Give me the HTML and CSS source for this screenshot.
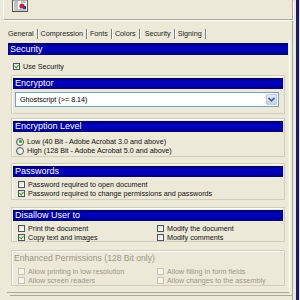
FILE: index.html
```html
<!DOCTYPE html>
<html lang="en">
<head>
  <meta charset="UTF-8">
  <title>Security</title>
  <link rel="stylesheet" href="styles.css">
</head>
<body>
<div class="window">
  <div class="top">
    <svg class="logo" width="16" height="12" viewBox="0 0 16 12">
      <rect x="0.5" y="0" width="15" height="11.5" fill="#fff" stroke="#555"/>
      <path d="M2 2h4M2 4h4M2 6h4M2 8h4M2 10h12M9 2h5" stroke="#888" stroke-width="1"/>
      <circle cx="10" cy="6" r="2.6" fill="#d02030"/>
      <rect x="11" y="6" width="3" height="3" fill="#2040c0"/>
    </svg>
  </div>

  <div class="tabs">
    <span class="tab">General</span>
    <span class="tab">Compression</span>
    <span class="tab">Fonts</span>
    <span class="tab">Colors</span>
    <span class="tab active">Security</span>
    <span class="tab">Signing</span>
  </div>

  <div class="panel">
    <div class="bar main">Security</div>
    <label class="row use"><span class="cb on"></span>Use Security</label>

    <div class="group g-enc">
      <div class="bar">Encryptor</div>
      <div class="select">
        <span>Ghostscript (&gt;= 8.14)</span>
        <span class="drop">
          <svg width="7" height="5" viewBox="0 0 7 5"><path d="M0.5 0.8L3.5 3.8L6.5 0.8" fill="none" stroke="#4d6185" stroke-width="1.6"/></svg>
        </span>
      </div>
    </div>

    <div class="group g-level">
      <div class="bar">Encryption Level</div>
      <label class="row ind-r"><span class="rb on"></span>Low (40 Bit - Adobe Acrobat 3.0 and above)</label>
      <label class="row ind-r"><span class="rb"></span>High (128 Bit - Adobe Acrobat 5.0 and above)</label>
    </div>

    <div class="group g-pass">
      <div class="bar">Passwords</div>
      <label class="row ind"><span class="cb"></span>Password required to open document</label>
      <label class="row ind"><span class="cb on"></span>Password required to change permissions and passwords</label>
    </div>

    <div class="group g-dis">
      <div class="bar">Disallow User to</div>
      <div class="cols">
        <label class="row"><span class="cb"></span>Print the document</label>
        <label class="row"><span class="cb"></span>Modify the document</label>
        <label class="row"><span class="cb on"></span>Copy text and images</label>
        <label class="row"><span class="cb"></span>Modify comments</label>
      </div>
    </div>

    <div class="group g-enh">
      <div class="legend">Enhanced Permissions (128 Bit only)</div>
      <div class="cols">
        <label class="row"><span class="cb off"></span>Allow printing in low resolution</label>
        <label class="row"><span class="cb off"></span>Allow filling in form fields</label>
        <label class="row"><span class="cb off"></span>Allow screen readers</label>
        <label class="row"><span class="cb off"></span>Allow changes to the assembly</label>
      </div>
    </div>
  </div>
</div>
</body>
</html>
```

FILE: styles.css
```css
body {
  margin: 0;
  width: 300px;
  height: 300px;
  overflow: hidden;
  background: #ece9d8;
  font-family: "Liberation Sans", Arial, sans-serif;
  font-size: 7.2px;
  color: #000;
}

.window {
  width: 299px;
  height: 300px;
  box-sizing: border-box;
  border-right: 3px solid #0b1a7c;
  box-shadow: inset -3px 0 0 #ece9d8, inset -4px 0 0 #aca899;
}

.top {
  height: 20px;
  margin-left: 3px;
  margin-right: 3px;
  box-sizing: border-box;
  border-left: 1px solid #fff;
  border-right: 1px solid #aca899;
  border-bottom: 1px solid #aca899;
  box-shadow: 1px 1px 0 #fff;
  padding-left: 8px;
}

.logo { display: block; }

.tabs {
  display: flex;
  margin-top: 8px;
  padding-left: 7px;
  height: 12px;
  align-items: center;
}

.tab {
  padding: 0 3px 0 1px;
  border-right: 1px solid #808080;
  box-shadow: 1px 0 0 #fff;
  margin-right: 2px;
  line-height: 10px;
  color: #222;
}

.tab.active {
  padding: 0 3px 0 3px;
}

.panel {
  margin: 0 6px 0 7px;
  height: 253px;
  box-sizing: border-box;
  border-right: 1px solid #fff;
  border-bottom: 1px solid #aca899;
  box-shadow: 2px 2px 0 #ece9d8, 3px 3px 0 #aca899;
  padding: 3px 1px 0 1px;
}

.bar {
  height: 11px;
  line-height: 11px;
  padding-left: 2px;
  color: #fff;
  font-size: 9px;
  background: linear-gradient(#00005a, #0000c4 35%, #0000b0 70%, #000070);
}

.bar.main {
  height: 12px;
  line-height: 12px;
}

.row {
  display: flex;
  align-items: center;
  height: 9px;
  white-space: nowrap;
  color: #111;
}

.use {
  margin: 7px 0 0 5px;
  height: 8px;
}

.cb, .rb {
  width: 7px;
  height: 7px;
  box-sizing: border-box;
  border: 1px solid #4b5660;
  background: linear-gradient(135deg, #dcdbd2, #fff);
  margin-right: 3px;
  flex: none;
  position: relative;
}

.cb.on::after {
  content: "";
  position: absolute;
  left: 1px;
  top: 0;
  width: 2px;
  height: 3px;
  border: solid #21a121;
  border-width: 0 1.5px 1.5px 0;
  transform: rotate(40deg);
}

.cb.off {
  border-color: #c5c2b2;
  background: #f4f3ee;
}

.rb {
  border-radius: 50%;
  width: 8px;
  height: 8px;
}

.rb.on::after {
  content: "";
  position: absolute;
  left: 1.5px;
  top: 1.5px;
  width: 3px;
  height: 3px;
  border-radius: 50%;
  background: #21a121;
}

.group {
  margin: 0 3px 0 3px;
  border: 1px solid #d0cdbd;
  box-shadow: inset 1px 1px 0 #fff;
  padding: 2px 1px 0 1px;
  box-sizing: border-box;
}

.g-enc { margin-top: 5px; height: 39px; }
.g-level { margin-top: 4px; height: 39px; }
.g-pass { margin-top: 6px; height: 37px; }
.g-dis { margin-top: 7px; height: 35px; }
.g-enh { margin-top: 8px; height: 36px; }

.select {
  margin: 3px 4px 0 2px;
  height: 15px;
  box-sizing: border-box;
  border: 1px solid #7f9db9;
  background: #fff;
  display: flex;
  align-items: center;
  justify-content: space-between;
  padding-left: 4px;
}

.drop {
  width: 11px;
  height: 11px;
  margin-right: 1px;
  box-sizing: border-box;
  border: 1px solid #b9c9ef;
  border-radius: 2px;
  background: linear-gradient(#e3ebfc, #c0d1f5);
  display: flex;
  align-items: center;
  justify-content: center;
}

.g-level .bar, .g-pass .bar, .g-dis .bar { margin-bottom: 3px; }
.g-level .bar { margin-bottom: 5px; }

.ind-r { padding-left: 3px; }
.ind { padding-left: 5px; }

.cols {
  display: grid;
  grid-template-columns: 139px 1fr;
  padding-left: 5px;
}

.legend {
  color: #9a9788;
  font-size: 8.6px;
  height: 11px;
  line-height: 10px;
  padding-left: 1px;
  margin-bottom: 3px;
}

.g-enh .row { color: #9a9788; }
```
